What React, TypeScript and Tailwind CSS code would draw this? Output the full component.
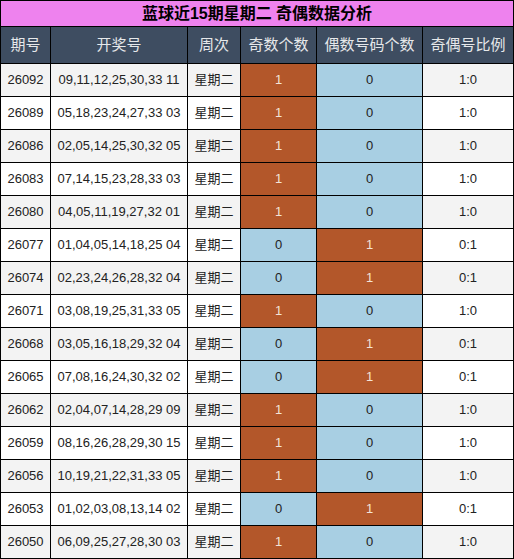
const rows: [string, string, number][] = [
  ["26092", "09,11,12,25,30,33 11", 1],
  ["26089", "05,18,23,24,27,33 03", 1],
  ["26086", "02,05,14,25,30,32 05", 1],
  ["26083", "07,14,15,23,28,33 03", 1],
  ["26080", "04,05,11,19,27,32 01", 1],
  ["26077", "01,04,05,14,18,25 04", 0],
  ["26074", "02,23,24,26,28,32 04", 0],
  ["26071", "03,08,19,25,31,33 05", 1],
  ["26068", "03,05,16,18,29,32 04", 0],
  ["26065", "07,08,16,24,30,32 02", 0],
  ["26062", "02,04,07,14,28,29 09", 1],
  ["26059", "08,16,26,28,29,30 15", 1],
  ["26056", "10,19,21,22,31,33 05", 1],
  ["26053", "01,02,03,08,13,14 02", 0],
  ["26050", "06,09,25,27,28,30 03", 1],
];

const heads = ["期号", "开奖号", "周次", "奇数个数", "偶数号码个数", "奇偶号比例"];

function Cell({ bg, children, light }: { bg: string; children: React.ReactNode; light?: boolean }) {
  return (
    <div className={`flex h-[32px] items-center justify-center ${bg} ${light ? "text-[#f3e3d8]" : "text-[#222]"}`}>
      {children}
    </div>
  );
}

export default function App() {
  return (
    <div className="w-[514px] h-[559px] bg-black p-px font-['Liberation_Sans','Noto_Sans_CJK_SC',sans-serif]">
      <div className="flex h-[25px] items-center justify-center bg-[#ee82ee] text-[16px] font-bold text-black">
        蓝球近15期星期二 奇偶数据分析
      </div>
      <div className="mt-px grid grid-cols-[49px_136px_52px_75px_105px_90px] gap-px text-[13px]">
        {heads.map((h) => (
          <div key={h} className="flex h-[36px] items-center justify-center bg-[#3e4d61] text-[15px] text-[#e6e8ea]">
            {h}
          </div>
        ))}
        {rows.map(([id, nums, odd], i) => {
          const bg = i % 2 === 0 ? "bg-[#f3f3f3]" : "bg-white";
          return [
            <Cell key={id + "a"} bg={bg}>{id}</Cell>,
            <Cell key={id + "b"} bg={bg}>{nums}</Cell>,
            <Cell key={id + "c"} bg={bg}>星期二</Cell>,
            <Cell key={id + "d"} bg={odd ? "bg-[#b3572a]" : "bg-[#a8cfe3]"} light={!!odd}>{odd}</Cell>,
            <Cell key={id + "e"} bg={odd ? "bg-[#a8cfe3]" : "bg-[#b3572a]"} light={!odd}>{odd ? 0 : 1}</Cell>,
            <Cell key={id + "f"} bg={bg}>{odd ? "1:0" : "0:1"}</Cell>,
          ];
        })}
      </div>
    </div>
  );
}
